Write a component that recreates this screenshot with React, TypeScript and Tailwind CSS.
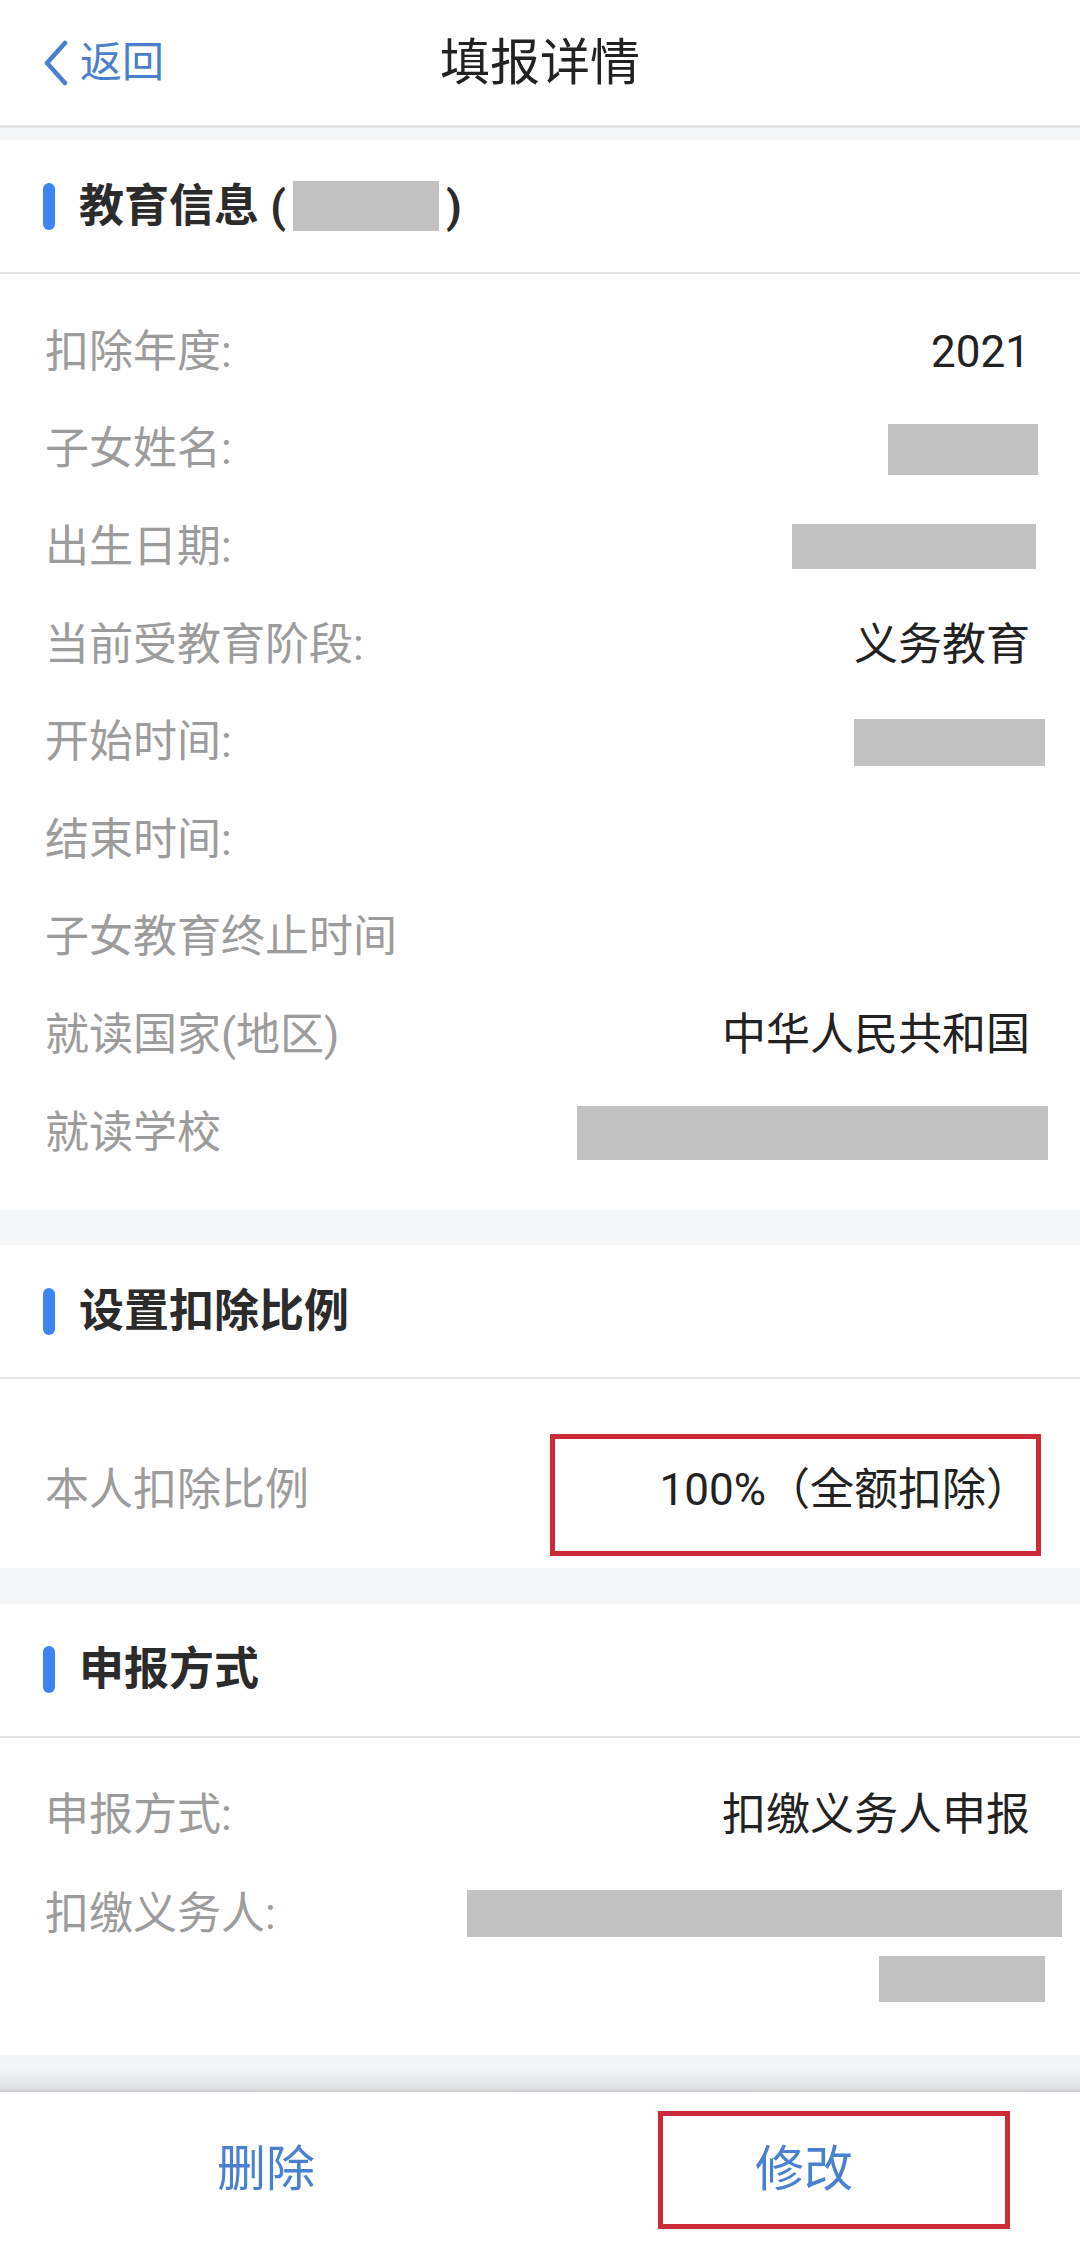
import React from "react";

type Row = {
  label: string;
  value?: string;
  box?: { w: string; h: string; mr: string };
};

const educationRows: Row[] = [
  { label: "扣除年度:", value: "2021" },
  { label: "子女姓名:", box: { w: "w-[150px]", h: "h-[51px]", mr: "mr-[-8px]" } },
  { label: "出生日期:", box: { w: "w-[244px]", h: "h-[45px]", mr: "mr-[-6px]" } },
  { label: "当前受教育阶段:", value: "义务教育" },
  { label: "开始时间:", box: { w: "w-[191px]", h: "h-[47px]", mr: "mr-[-15px]" } },
  { label: "结束时间:" },
  { label: "子女教育终止时间" },
  { label: "就读国家(地区)", value: "中华人民共和国" },
  { label: "就读学校", box: { w: "w-[471px]", h: "h-[54px]", mr: "mr-[-18px]" } },
];

function SectionTitle({ children }: { children: React.ReactNode }) {
  return (
    <div className="flex h-[134px] items-center border-b-2 border-[#e6e6e8] pl-[43px]">
      <span className="h-[47px] w-[12px] rounded-full bg-[#3e84f2]" />
      <h2 className="ml-[24px] flex items-center text-[45px] font-bold leading-none text-[#2b2b2b]">
        {children}
      </h2>
    </div>
  );
}

function InfoRow({ row }: { row: Row }) {
  return (
    <div className="flex h-[97.6px] items-center justify-between pl-[45px] pr-[50px]">
      <span className="text-[44px] leading-none text-[#9c9c9c]">{row.label}</span>
      {row.value && (
        <span className="text-[44px] leading-none text-[#222]">{row.value}</span>
      )}
      {row.box && (
        <span className={`${row.box.w} ${row.box.h} ${row.box.mr} bg-[#c2c2c2]`} />
      )}
    </div>
  );
}

function Band() {
  return <div className="h-[35px] bg-[#f5f6f8]" />;
}

export default function App() {
  return (
    <div className="flex min-h-[2260px] w-[1080px] flex-col bg-white font-['Roboto','Noto_Sans_CJK_SC',sans-serif]">
      {/* Top bar */}
      <header className="grid h-[128px] grid-cols-[1fr_auto_1fr] items-center border-b-[3px] border-[#e4e5e7]">
        <button className="flex items-center pl-[43px] text-[#4a7fcb]">
          <svg width="26" height="46" viewBox="0 0 26 46" fill="none">
            <path
              d="M22 3L4 23l18 20"
              stroke="currentColor"
              strokeWidth={4.5}
              strokeLinecap="round"
              strokeLinejoin="round"
            />
          </svg>
          <span className="ml-[11px] text-[42px] leading-none">返回</span>
        </button>
        <h1 className="text-[50px] font-normal leading-none text-[#222]">填报详情</h1>
        <div />
      </header>
      <div className="h-[12px] bg-[#f5f6f8]" />

      {/* 教育信息 */}
      <section className="bg-white">
        <SectionTitle>
          <span>教育信息 (</span>
          <span className="mx-[7px] inline-block h-[50px] w-[146px] bg-[#c2c2c2]" />
          <span>)</span>
        </SectionTitle>
        <div className="pt-[29px] pb-[29px]">
          {educationRows.map((row) => (
            <InfoRow key={row.label} row={row} />
          ))}
        </div>
      </section>

      <Band />

      {/* 设置扣除比例 */}
      <section className="bg-white">
        <SectionTitle>设置扣除比例</SectionTitle>
        <div className="pt-[62px] pb-[29px]">
          <div className="relative flex h-[97.6px] items-center justify-between pl-[45px] pr-[50px]">
            <span className="text-[44px] leading-none text-[#9c9c9c]">本人扣除比例</span>
            <span className="text-[44px] leading-none text-[#222]">100%（全额扣除）</span>
            <span className="absolute left-[550px] top-[-7px] h-[122px] w-[491px] border-[5px] border-[#cc2a36]" />
          </div>
        </div>
      </section>

      <div className="h-[36px] bg-[#f5f6f8]" />

      {/* 申报方式 */}
      <section className="bg-white">
        <SectionTitle>申报方式</SectionTitle>
        <div className="pt-[28px] pb-[53px]">
          <InfoRow row={{ label: "申报方式:", value: "扣缴义务人申报" }} />
          <div className="flex items-start justify-between pl-[45px] pr-[50px] pt-[26px]">
            <span className="text-[44px] leading-[48px] text-[#9c9c9c]">扣缴义务人:</span>
            <div className="flex flex-col items-end">
              <span className="mr-[-32px] h-[47px] w-[595px] bg-[#c2c2c2]" />
              <span className="mr-[-15px] mt-[19px] h-[46px] w-[166px] bg-[#c2c2c2]" />
            </div>
          </div>
        </div>
      </section>

      {/* Bottom actions */}
      <div className="h-[37px] border-b-2 border-[#cfd0d2] bg-linear-to-b from-[#f5f6f8] via-[#f1f2f4] to-[#dcdde0]" />
      <footer className="grid h-[168px] grid-cols-2 bg-white">
        <button className="flex h-[156px] items-center justify-center pr-[8px] text-[49px] leading-none text-[#4a80d0]">
          删除
        </button>
        <button className="relative flex h-[156px] items-center justify-center pr-[12px] text-[49px] leading-none text-[#4a80d0]">
          修改
          <span className="absolute left-[118px] top-[19px] h-[118px] w-[352px] border-[5px] border-[#cc2a36]" />
        </button>
      </footer>
    </div>
  );
}
